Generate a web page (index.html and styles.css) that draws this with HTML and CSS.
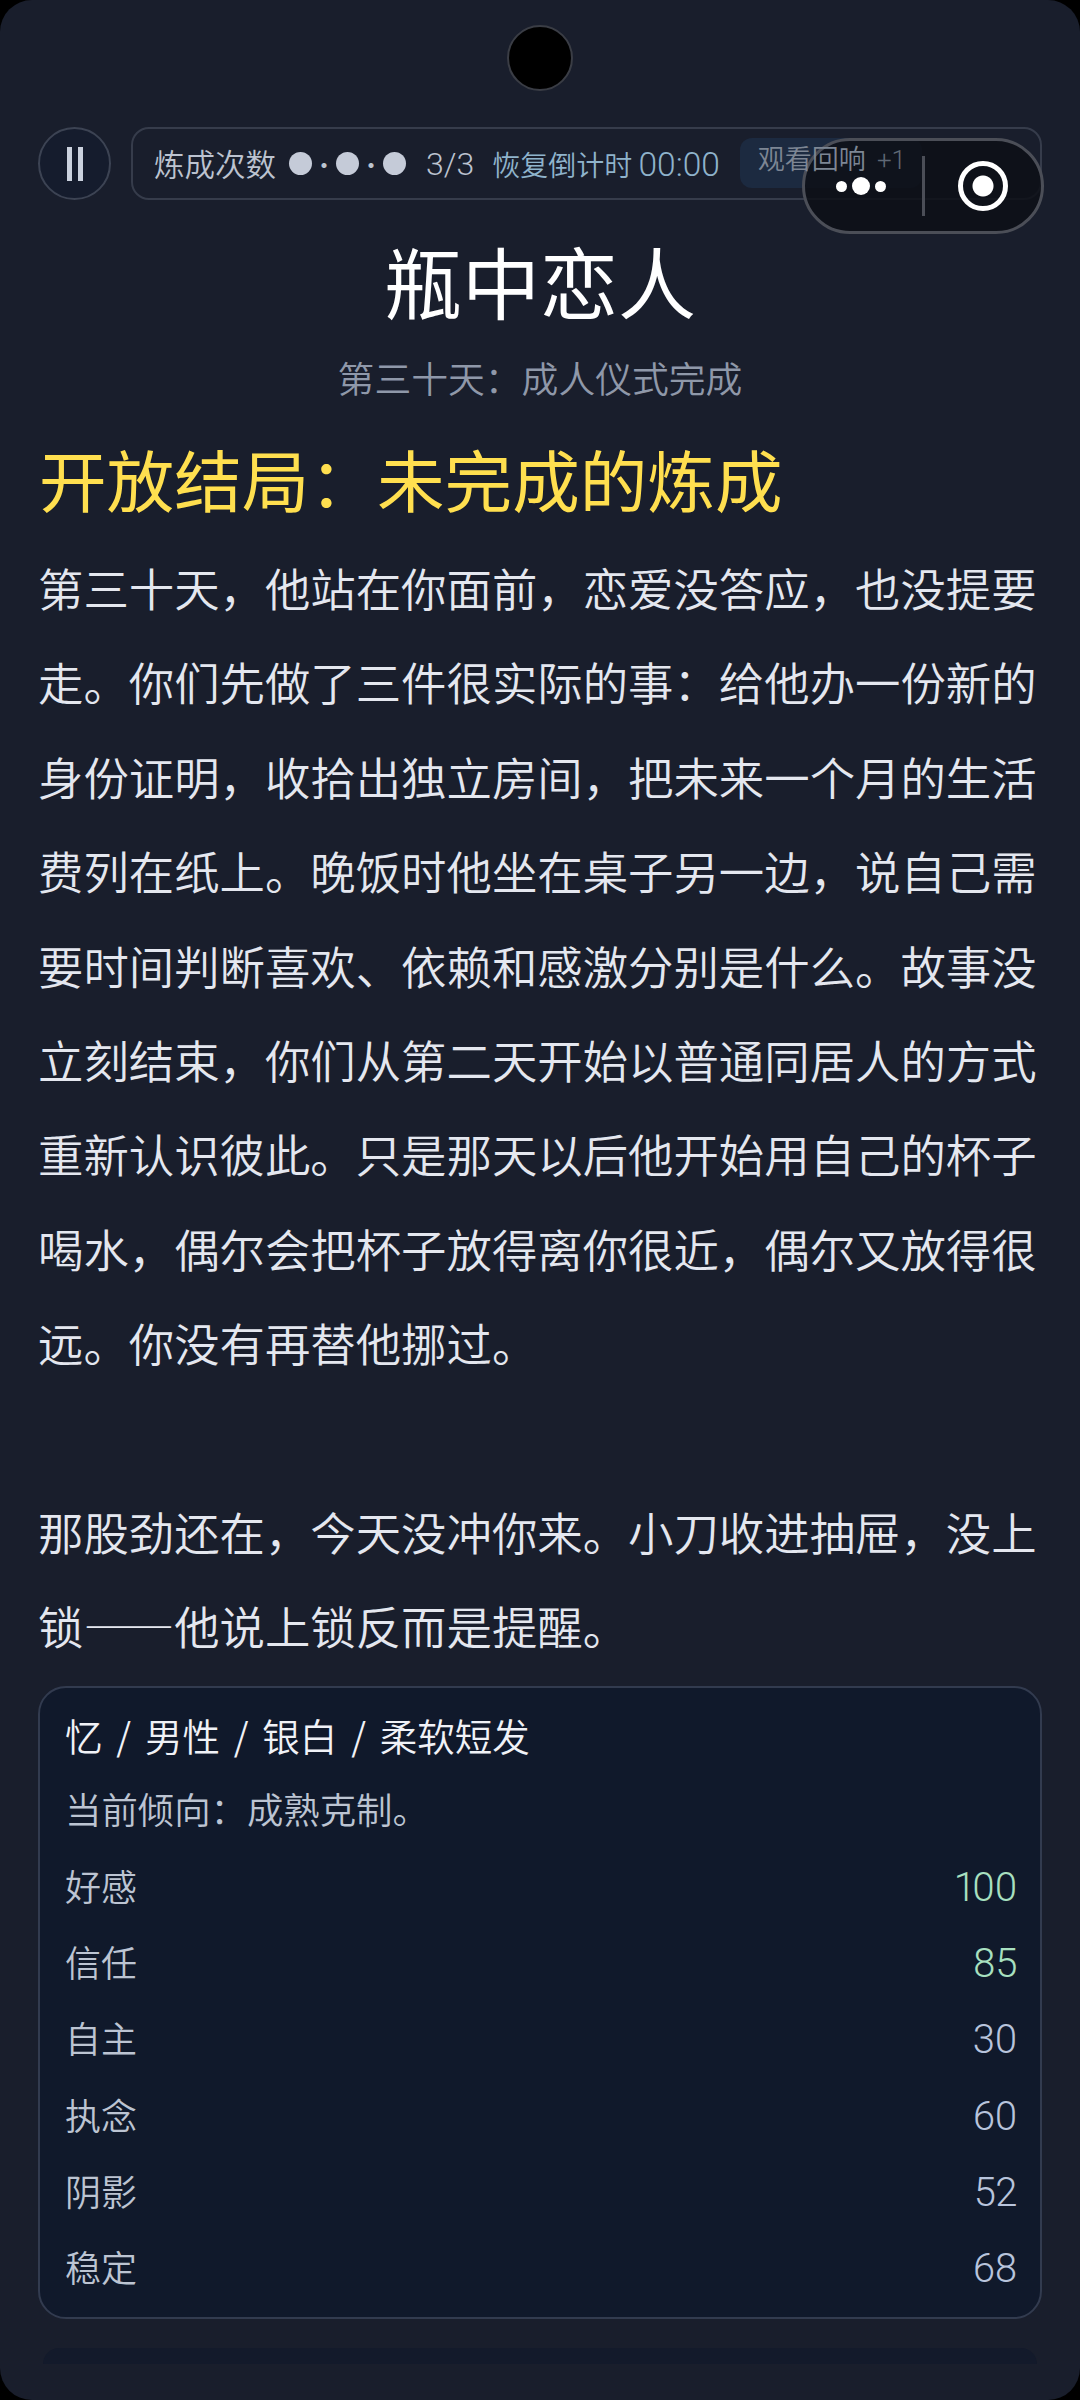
FILE: index.html
```html
<!DOCTYPE html>
<html lang="zh-CN">

<head>
    <meta charset="UTF-8">
    <meta name="viewport" content="width=device-width, initial-scale=1.0">
    <title>瓶中恋人</title>
    <link rel="stylesheet" href="styles.css">
</head>

<body>
    <div class="screen">
        <div class="camera"></div>

        <div class="capsule">
            <div class="capsule-more">
                <i class="dot-small"></i><i class="dot-big"></i><i class="dot-small"></i>
            </div>
            <div class="capsule-line"></div>
            <div class="capsule-target"><i></i></div>
        </div>

        <div class="top-bar">
            <div class="pause"><i></i><i></i></div>
            <div class="panel">
                <span class="panel-label">炼成次数</span>
                <span class="charges">
                    <i class="charge"></i><b>·</b><i class="charge"></i><b>·</b><i class="charge"></i>
                </span>
                <span class="panel-count">3/3</span>
                <span class="panel-timer">恢复倒计时 <span class="panel-time">00:00</span></span>
                <span class="panel-chip"><span class="chip-text">观看回响 <em>+1</em></span></span>
            </div>
        </div>

        <h1 class="title">瓶中恋人</h1>
        <div class="subtitle">第三十天：成人仪式完成</div>
        <h2 class="ending">开放结局：未完成的炼成</h2>

        <p class="story">第三十天，他站在你面前，恋爱没答应，也没提要走。你们先做了三件很实际的事：给他办一份新的身份证明，收拾出独立房间，把未来一个月的生活费列在纸上。晚饭时他坐在桌子另一边，说自己需要时间判断喜欢、依赖和感激分别是什么。故事没立刻结束，你们从第二天开始以普通同居人的方式重新认识彼此。只是那天以后他开始用自己的杯子喝水，偶尔会把杯子放得离你很近，偶尔又放得很远。你没有再替他挪过。</p>
        <p class="story story-next">那股劲还在，今天没冲你来。小刀收进抽屉，没上锁——他说上锁反而是提醒。</p>

        <div class="card">
            <div class="card-name">忆 / 男性 / 银白 / 柔软短发</div>
            <div class="card-lean">当前倾向：成熟克制。</div>
            <div class="stat"><span>好感</span><span class="stat-val high">100</span></div>
            <div class="stat"><span>信任</span><span class="stat-val high">85</span></div>
            <div class="stat"><span>自主</span><span class="stat-val">30</span></div>
            <div class="stat"><span>执念</span><span class="stat-val">60</span></div>
            <div class="stat"><span>阴影</span><span class="stat-val">52</span></div>
            <div class="stat"><span>稳定</span><span class="stat-val">68</span></div>
        </div>

        <div class="next-card"></div>
    </div>
</body>

</html>
```

FILE: styles.css
```css
* {
    margin: 0;
    padding: 0;
    box-sizing: border-box;
}

html,
body {
    width: 1080px;
    height: 2400px;
    background: #000;
    overflow: hidden;
}

body {
    font-family: "Noto Sans CJK SC", "Noto Sans", sans-serif;
    font-weight: 350;
}

.screen {
    position: relative;
    width: 1080px;
    height: 2400px;
    padding: 127px 38px 0;
    background: #191e2c;
    border-radius: 32px;
    overflow: hidden;
}

.camera {
    position: absolute;
    left: 507px;
    top: 25px;
    width: 66px;
    height: 66px;
    background: #000;
    border: 2px solid #3a3d45;
    border-radius: 50%;
}

/* mini program capsule sits on top of the page */
.capsule {
    position: absolute;
    left: 802px;
    top: 138px;
    width: 242px;
    height: 96px;
    display: flex;
    align-items: center;
    background: rgba(13, 15, 22, 0.85);
    border: 3px solid #4b4e57;
    border-radius: 48px;
    z-index: 5;
}

.capsule-more {
    width: 117px;
    padding-right: 6px;
    display: flex;
    align-items: center;
    justify-content: center;
    gap: 5px;
}

.capsule-more i {
    display: block;
    background: #fff;
    border-radius: 50%;
}

.dot-small {
    width: 11px;
    height: 11px;
}

.dot-big {
    width: 18px;
    height: 18px;
}

.capsule-line {
    width: 3px;
    height: 60px;
    background: #4b4e57;
}

.capsule-target {
    flex: 1;
    display: flex;
    align-items: center;
    justify-content: center;
}

.capsule-target i {
    display: block;
    width: 50px;
    height: 50px;
    border: 5px solid #fff;
    border-radius: 50%;
    background: radial-gradient(circle, #fff 0 10px, transparent 11px);
}

.top-bar {
    display: flex;
    align-items: center;
    gap: 20px;
    height: 73px;
}

.pause {
    flex: none;
    width: 73px;
    height: 73px;
    display: flex;
    align-items: center;
    justify-content: center;
    gap: 6px;
    background: #151c2d;
    border: 2px solid #3c4353;
    border-radius: 50%;
}

.pause i {
    display: block;
    width: 5px;
    height: 34px;
    background: #cbd2de;
}

.panel {
    flex: 1;
    height: 73px;
    display: flex;
    align-items: center;
    padding-left: 21px;
    border: 2px solid #363c4b;
    border-radius: 18px;
    white-space: nowrap;
    overflow: hidden;
}

.panel-label {
    font-size: 30.5px;
    line-height: 40px;
    margin-top: -2px;
    color: #bcc3d0;
}

.charges {
    margin-left: 13px;
    display: flex;
    align-items: center;
    font-size: 24px;
    color: #bcc3d0;
}

.charges b {
    width: 24px;
    text-align: center;
    font-weight: 400;
}

.charge {
    display: block;
    width: 23px;
    height: 23px;
    background: #c5cbd8;
    border-radius: 50%;
}

.panel-count {
    margin-left: 20px;
    font-family: Roboto, sans-serif;
    font-size: 32px;
    font-weight: 300;
    color: #bcc3d0;
}

.panel-timer {
    margin-left: 18px;
    font-size: 28px;
    color: #8fb3cb;
}

.panel-time {
    font-family: Roboto, sans-serif;
    font-size: 33.5px;
    font-weight: 300;
}

.panel-chip {
    align-self: flex-start;
    margin: 9px 0 0 20px;
    width: 182px;
    height: 50px;
    padding-left: 18px;
    font-size: 27px;
    line-height: 40px;
    background: #1c2a40;
    border-radius: 12px;
}

/* the label shows through the capsule */
.chip-text {
    position: relative;
    z-index: 6;
    color: #7d8694;
}

.panel-chip em {
    margin-left: 5px;
    font-family: Roboto, sans-serif;
    font-style: normal;
    font-size: 26px;
    color: #5f6875;
}

.title {
    margin-top: 30px;
    text-align: center;
    font-size: 78px;
    font-weight: 400;
    line-height: 100px;
    color: #fff;
}

.subtitle {
    margin-top: 22px;
    text-align: center;
    font-size: 36.8px;
    line-height: 50px;
    color: #8f98a9;
}

.ending {
    margin-top: 31px;
    padding-left: 1px;
    font-size: 67.6px;
    font-weight: 400;
    line-height: 90px;
    color: #ffdf4f;
}

.story {
    margin-top: 17px;
    font-size: 45.4px;
    line-height: 94.4px;
    color: #e4e7ef;
}

.story-next {
    margin-top: 94.4px;
}

.card {
    height: 633px;
    margin-top: 13px;
    padding: 20px 23px 0 25px;
    background: #10192b;
    border: 2px solid #323b4f;
    border-radius: 28px;
}

.card-name {
    font-size: 37.5px;
    line-height: 54px;
    word-spacing: 5.5px;
    color: #f0f2f7;
}

.card-lean {
    margin-top: 21px;
    font-size: 36.4px;
    line-height: 50px;
    color: #bcc4d2;
}

.stat {
    height: 76.2px;
    display: flex;
    align-items: center;
    justify-content: space-between;
    font-size: 36px;
    color: #bcc4d2;
}

.card-lean + .stat {
    margin-top: 14px;
}

.stat-val {
    padding-top: 5px;
    font-family: Roboto, sans-serif;
    font-size: 40px;
    font-weight: 300;
    font-variant-numeric: proportional-nums;
    letter-spacing: -0.5px;
    color: #b8c4dc;
}

.stat-val.high {
    color: #a8e0c0;
}

.next-card {
    height: 16px;
    margin: 29px 5px 0;
    background: #131a2b;
    border-radius: 24px 24px 0 0;
}
```
